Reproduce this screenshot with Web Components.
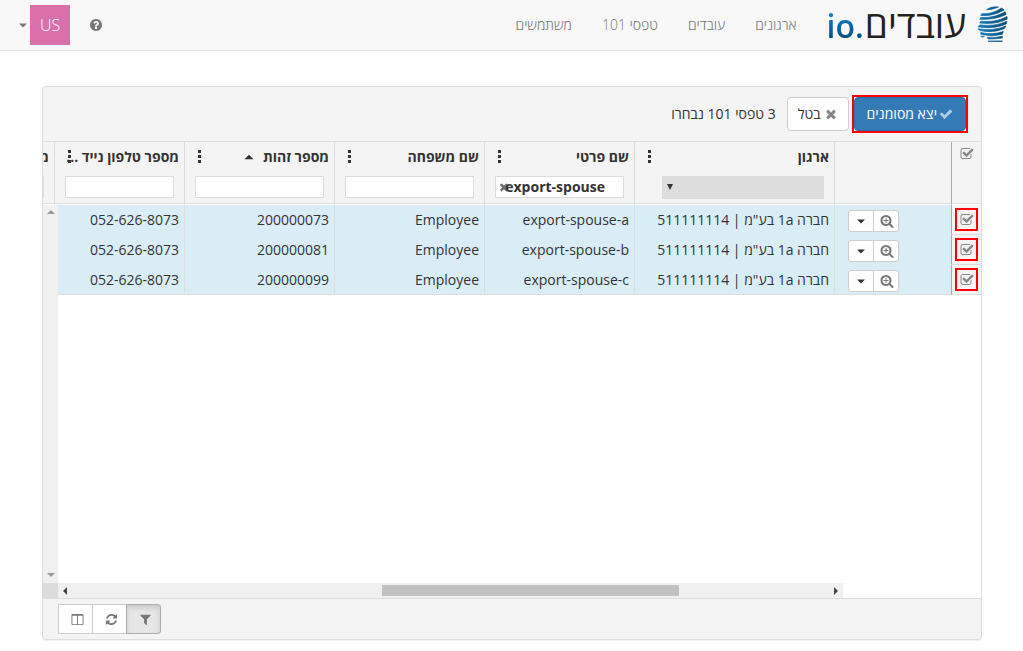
<!DOCTYPE html>
<html lang="he" dir="rtl">
<head>
<meta charset="utf-8">
<meta name="viewport" content="width=device-width, initial-scale=1">
<title>טפסי 101</title>
<style>
  body {
    margin: 0;
    min-height: 100vh;
    display: flex;
    flex-direction: column;
    background: #fff;
    color: #333;
    font: 14px/20px "Open Sans", "Noto Sans", sans-serif;
  }
  grid-panel { flex: 1; margin: 35px 41px 11px 42px; }
</style>
</head>
<body>
<app-header>
  <nav-item href="#orgs">ארגונים</nav-item>
  <nav-item href="#employees">עובדים</nav-item>
  <nav-item href="#forms">טפסי 101</nav-item>
  <nav-item href="#users">משתמשים</nav-item>
</app-header>
<grid-panel>
  <selection-bar slot="top" count="3 טפסי 101 נבחרו"></selection-bar>
  <data-grid></data-grid>
  <grid-tools slot="bottom"></grid-tools>
</grid-panel>

<script>
const ICONS = {
  check: 'M1671 566q0 40-28 68l-724 724-136 136q-28 28-68 28t-68-28l-136-136-362-362q-28-28-28-68t28-68l136-136q28-28 68-28t68 28l294 295 656-657q28-28 68-28t68 28l136 136q28 28 28 68z',
  times: 'M1490 1322q0 40-28 68l-136 136q-28 28-68 28t-68-28l-294-294-294 294q-28 28-68 28t-68-28l-136-136q-28-28-28-68t28-68l294-294-294-294q-28-28-28-68t28-68l136-136q28-28 68-28t68 28l294 294 294-294q28-28 68-28t68 28l136 136q28 28 28 68t-28 68l-294 294 294 294q28 28 28 68z',
  tick: 'M1472 930v318q0 119-84.5 203.5t-203.5 84.5h-832q-119 0-203.5-84.5t-84.5-203.5v-832q0-119 84.5-203.5t203.5-84.5h832q63 0 117 25 15 7 18 23 3 17-9 29l-49 49q-10 10-23 10-3 0-9-2-23-6-45-6h-832q-66 0-113 47t-47 113v832q0 66 47 113t113 47h832q66 0 113-47t47-113v-254q0-13 9-22l64-64q10-10 23-10 6 0 12 3 20 8 20 29zm231-489l-814 814q-24 24-57 24t-57-24l-430-430q-24-24-24-57t24-57l110-110q24-24 57-24t57 24l263 263 647-647q24-24 57-24t57 24l110 110q24 24 24 57t-24 57z',
  filter: 'M1595 295q17 41-14 70l-493 493v742q0 42-39 59-13 5-25 5-27 0-45-19l-256-256q-19-19-19-45v-486l-493-493q-31-29-14-70 17-39 59-39h1280q42 0 59 39z',
  refresh: 'M1639 1056q0 5-1 7-64 268-268 434.5t-478 166.5q-146 0-282.5-55t-243.5-157l-129 129q-19 19-45 19t-45-19-19-45v-448q0-26 19-45t45-19h448q26 0 45 19t19 45-19 45l-137 137q71 66 161 102t187 36q134 0 250-65t186-179q11-17 53-117 8-23 30-23h192q13 0 22.5 9.5t9.5 22.5zm25-800v448q0 26-19 45t-45 19h-448q-26 0-45-19t-19-45 19-45l138-138q-148-137-349-137-134 0-250 65t-186 179q-11 17-53 117-8 23-30 23h-199q-13 0-22.5-9.5t-9.5-22.5v-7q65-268 270-434.5t480-166.5q146 0 284 55.5t245 156.5l130-129q19-19 45-19t45 19 19 45z',
  zoom: 'M1088 800v64q0 13-9.5 22.5t-22.5 9.5h-224v224q0 13-9.5 22.5t-22.5 9.5h-64q-13 0-22.5-9.5t-9.5-22.5v-224h-224q-13 0-22.5-9.5t-9.5-22.5v-64q0-13 9.5-22.5t22.5-9.5h224v-224q0-13 9.5-22.5t22.5-9.5h64q13 0 22.5 9.5t9.5 22.5v224h224q13 0 22.5 9.5t9.5 22.5zm128 32q0-185-131.5-316.5t-316.5-131.5-316.5 131.5-131.5 316.5 131.5 316.5 316.5 131.5 316.5-131.5 131.5-316.5zm512 832q0 53-37.5 90.5t-90.5 37.5q-54 0-90-38l-343-342q-179 124-399 124-143 0-273.5-55.5t-225-150-150-225-55.5-273.5 55.5-273.5 150-225 225-150 273.5-55.5 273.5 55.5 225 150 150 225 55.5 273.5q0 220-124 399l343 343q37 37 37 90z',
  help: 'M1024 1376v-192q0-14-9-23t-23-9h-192q-14 0-23 9t-9 23v192q0 14 9 23t23 9h192q14 0 23-9t9-23zm256-672q0-88-55.5-163t-138.5-116-170-41q-243 0-371 213-15 24 8 42l132 100q7 6 19 6 16 0 25-12 53-68 86-92 34-24 86-24 48 0 85.5 26t37.5 59q0 38-20 61t-68 45q-63 28-115.5 86.5t-52.5 125.5v36q0 14 9 23t23 9h192q14 0 23-9t9-23q0-19 21.5-49.5t54.5-49.5q32-18 49-28.5t46-35 44.5-48 28-60.5 12.5-81zm384 192q0 209-103 385.5t-279.5 279.5-385.5 103-385.5-103-279.5-279.5-103-385.5 103-385.5 279.5-279.5 385.5-103 385.5 103 279.5 279.5 103 385.5z',
  columns: 'M224 1536h608v-1152h-640v1120q0 13 9.5 22.5t22.5 9.5zm1376-32v-1120h-640v1152h608q13 0 22.5-9.5t9.5-22.5zm128-1216v1216q0 66-47 113t-113 47h-1344q-66 0-113-47t-47-113v-1216q0-66 47-113t113-47h1344q66 0 113 47t47 113z',
  caret: 'M384 704h1024l-512 512z',
  up: 'M384 1152h1024l-512-512z'
};

function define(name, html, setup) {
  const tpl = document.createElement('template');
  tpl.innerHTML = html;
  customElements.define(name, class extends HTMLElement {
    constructor() {
      super();
      this.attachShadow({ mode: 'open' }).append(tpl.content.cloneNode(true));
    }
    connectedCallback() {
      if (setup && !this.ready) { this.ready = true; setup(this, this.shadowRoot); }
    }
  });
}

/* Single glyph from the icon set */
define('ui-icon', `
  <style>
    :host { display: inline-flex; flex: none; width: 14px; height: 14px; }
    svg { width: 100%; height: 100%; fill: currentColor; }
  </style>
  <svg viewBox="0 0 1792 1792" aria-hidden="true"><path/></svg>`,
  (el, root) => root.querySelector('path').setAttribute('d', ICONS[el.getAttribute('name')]));

/* Red frame drawn round the controls of interest */
define('mark-frame', `
  <style>:host { display: inline-flex; box-sizing: border-box; border: 2px solid #f00; }</style>
  <slot></slot>`);

define('tick-box', `
  <style>
    :host { display: inline-flex; }
    label { display: grid; padding: 3px 2px 2px 3px; color: #888; cursor: pointer; }
    input { appearance: none; margin: 0; width: 14px; height: 14px; grid-area: 1 / 1; }
    ui-icon { grid-area: 1 / 1; pointer-events: none; }
  </style>
  <label><input type="checkbox" checked><ui-icon name="tick"></ui-icon></label>`,
  (el, root) => root.querySelector('input').setAttribute('aria-label', el.getAttribute('label')));

define('nav-item', `
  <style>
    :host { display: block; }
    a { display: block; padding: 15px; color: #777; font-weight: 300; text-decoration: none; }
  </style>
  <a><slot></slot></a>`,
  (el, root) => { root.querySelector('a').href = el.getAttribute('href'); });

define('brand-logo', `
  <style>
    :host { display: block; }
    a { display: flex; align-items: center; height: 50px; padding: 0 15px; gap: 10px; direction: rtl; text-decoration: none; }
    .word { display: flex; direction: ltr; align-items: baseline; gap: 1px; }
    .io {
      font: 600 32px/50px "Open Sans", sans-serif;
      background: linear-gradient(#0a7cc4 30%, #07466f 85%);
      background-clip: text;
      color: transparent;
    }
    .he { font-size: 37px; line-height: 50px; font-weight: 500; color: #222; }
    svg { width: 32px; height: 36px; flex: none; margin-bottom: 2px; }
  </style>
  <a href="#home">
    <svg viewBox="0 0 34 38" aria-hidden="true">
      <defs><linearGradient id="g" gradientUnits="userSpaceOnUse" x1="0" y1="0" x2="34" y2="0"><stop offset="0" stop-color="#0d7cc0"/><stop offset="1" stop-color="#0a4a74"/></linearGradient></defs>
      <g fill="url(#g)" stroke="url(#g)" stroke-width=".7" stroke-linejoin="round">
        <path d="M11 4Q18 4 24 1Q16 0 11 4Z"/>
        <path d="M6 8Q17 9 27 2L30 4Q18 11 5 10Z"/>
        <path d="M5 12Q19 13 31 6L32 9Q19 15 4 14Z"/>
        <path d="M5 16Q20 18 33 11L33 14Q20 20 4 18Z"/>
        <path d="M4 20Q20 22 33 16L32 19Q19 25 2 22Z"/>
        <path d="M2 24Q18 27 32 21L30 24Q18 29 4 26Z"/>
        <path d="M5 28Q18 31 29 27L28 30Q17 33 5 30Z"/>
        <path d="M5 32L9 32L7 33Z"/>
        <path d="M12 33Q20 34 28 32V34Q20 35 13 35Z"/>
        <path d="M13 37H28V37.6H13Z"/>
      </g>
    </svg>
    <span class="word"><span class="io">io.</span><span class="he">עובדים</span></span>
  </a>`);

define('app-header', `
  <style>
    :host { display: block; background: #f8f8f8; border-bottom: 1px solid #e7e7e7; }
    header, nav, .side { display: flex; align-items: center; }
    header { min-height: 50px; justify-content: space-between; }
    .side { direction: ltr; padding-left: 16px; gap: 19px; }
    button { border: 0; padding: 0; background: none; color: #777; font: inherit; display: flex; align-items: center; }
    .avatar { display: block; width: 40px; background: #d96fab; color: #fff; font-size: 16px; font-weight: 300; line-height: 40px; text-align: center; }
  </style>
  <header>
    <nav><brand-logo></brand-logo><slot></slot></nav>
    <div class="side">
      <button class="user"><ui-icon name="caret"></ui-icon><span class="avatar">US</span></button>
      <button aria-label="עזרה"><ui-icon name="help"></ui-icon></button>
    </div>
  </header>`);

define('grid-panel', `
  <style>
    :host { display: flex; flex-direction: column; border: 1px solid #ddd; border-radius: 4px; overflow: hidden; background: #f4f4f4; box-shadow: 0 1px 1px rgba(0,0,0,.05); }
    ::slotted(data-grid) { flex: 1; }
  </style>
  <slot name="top"></slot><slot></slot><slot name="bottom"></slot>`);

define('selection-bar', `
  <style>
    :host { display: flex; align-items: center; padding: 8px 13px; border-bottom: 1px solid #ddd; }
    button { display: flex; align-items: center; gap: 2px; height: 34px; box-sizing: border-box; padding: 0 12px; border: 1px solid #ccc; border-radius: 4px; background: #fff; color: #333; font: inherit; }
    button ui-icon { opacity: .6; }
    .primary { background: #337ab7; border-color: #2e6da4; color: #fff; }
    .cancel { margin: 0 3px 0 11px; padding: 0 10px; gap: 3px; }
  </style>
  <mark-frame><button class="primary"><ui-icon name="check"></ui-icon>יצא מסומנים</button></mark-frame>
  <button class="cancel"><ui-icon name="times"></ui-icon>בטל</button>
  <span></span>`,
  (el, root) => { root.querySelector('span').textContent = el.getAttribute('count'); });

/* Column heading: title, sort arrow, menu dots and an optional filter */
define('column-head', `
  <style>
    :host { display: block; position: relative; height: 61px; font-weight: bold; }
    .title { display: flex; align-items: center; height: 34px; padding: 0 5px 4px; box-sizing: border-box; white-space: nowrap; gap: 6px; }
    .menu { position: absolute; left: 12px; top: 8px; width: 5px; height: 13px; padding: 0; border: 0; display: grid; background: none; color: #333; }
    svg { width: 5px; height: 13px; fill: currentColor; }
    .filter { margin: 0 10px; position: relative; }
    input { display: block; width: 100%; height: 22px; box-sizing: border-box; border: 1px solid #ddd; background: #fff; padding: 0 18px 2px 5px; font: inherit; color: #333; }
    select { display: block; width: 100%; height: 23px; border: 0; background: #ddd; appearance: none; font: inherit; }
    .pick { margin-left: 27px; }
    .pick::after { content: ""; position: absolute; left: 5px; top: 8px; border: solid transparent; border-width: 6px 3px 0; border-top-color: #333; }
    .clear { position: absolute; left: 3px; top: 5px; width: 12px; height: 12px; padding: 0; border: 0; background: none; color: #333; opacity: .7; display: grid; }
    .clear ui-icon { width: 12px; height: 12px; }
    .title ui-icon { width: 16px; height: 16px; }
  </style>
  <div class="title"><slot></slot></div>
  <button class="menu" aria-label="תפריט עמודה"><svg viewBox="0 0 5 13"><path d="M1 0h3v3H1zM1 5h3v3H1zM1 10h3v3H1z"/></svg></button>
  <div class="filter"></div>`,
  (el, root) => {
    const kind = el.getAttribute('filter'), box = root.querySelector('.filter');
    if (el.hasAttribute('sorted')) root.querySelector('.title').insertAdjacentHTML('beforeend', '<ui-icon name="up"></ui-icon>');
    const field = document.createElement(kind === 'select' ? 'select' : 'input');
    field.setAttribute('aria-label', 'סינון ' + el.textContent);
    box.append(field);
    if (kind === 'select') box.classList.add('pick');
    else if (el.hasAttribute('value')) {
      field.value = el.getAttribute('value');
      box.insertAdjacentHTML('beforeend', '<button class="clear" aria-label="נקה"><ui-icon name="times"></ui-icon></button>');
    }
  });

define('row-actions', `
  <style>
    :host { display: flex; direction: ltr; padding: 2px 0 0 13px; }
    button { width: 26px; height: 22px; box-sizing: border-box; border: 1px solid #ccc; background: #fff; color: #333; padding: 0; display: flex; align-items: center; justify-content: center; border-radius: 3px 0 0 3px; }
    button + button { margin-left: -1px; border-radius: 0 3px 3px 0; color: #777; padding-left: 2px; }
  </style>
  <button aria-label="פעולות"><ui-icon name="caret"></ui-icon></button>
  <button aria-label="הצג"><ui-icon name="zoom"></ui-icon></button>`);

define('data-grid', `
  <style>
    :host { display: flex; flex-direction: column; background: #fff; }
    .view { position: relative; flex: 1; overflow: hidden; }
    table { table-layout: fixed; border-collapse: separate; border-spacing: 0; width: 1007px; }
    .c-check { width: 30px; } .c-act { width: 117px; } .c-org { width: 200px; }
    .c-name { width: 150px; } .c-phone { width: 130px; } .c-more { width: 80px; }
    th, td { padding: 0; box-sizing: border-box; border-left: 1px solid #ddd; text-align: right; overflow: hidden; white-space: nowrap; }
    th { height: 63px; vertical-align: top; background: #f4f4f4; border-bottom: 1px solid #fff; box-shadow: inset 0 -1px #ddd; }
    td { height: 30px; padding-right: 5px; background: #d9edf7; }
    tr > :first-child { border-left-color: #aaa; text-align: center; padding: 0; }
    td:first-child { background: #f4f4f4; border-bottom: 1px solid #ddd; }
    th:first-child tick-box { margin-top: 2px; }
    tbody tr:last-child td { border-bottom: 1px solid #ddd; }
    td mark-frame { vertical-align: middle; }
    .vbar { position: absolute; left: 0; top: 63px; bottom: 0; width: 15px; background: #f0f0f0; display: flex; flex-direction: column; justify-content: space-between; align-items: center; padding: 5px 0 6px; box-sizing: border-box; }
    i { border: 4px solid transparent; }
    .u { border-top: 0; border-bottom-color: #999; }
    .d { border-bottom: 0; border-top-color: #999; }
    .l { border-left: 0; border-right-color: #444; }
    .r { border-right: 0; border-left-color: #444; }
    .foot { display: flex; direction: ltr; height: 15px; padding-right: 138px; border-bottom: 1px solid #ddd; }
    .corner { width: 15px; background: #dcdcdc; }
    .hbar { flex: 1; display: flex; align-items: center; justify-content: space-between; padding: 0 5px; background: #f0f0f0; }
    .track { flex: 1; display: flex; margin: 0 6px; }
    .before { flex: 309; } .thumb { flex: 297; height: 11px; background: #c1c1c1; } .after { flex: 149; }
  </style>
  <div class="view">
    <table>
      <colgroup><col class="c-check"><col class="c-act"><col class="c-org"><col class="c-name"><col class="c-name"><col class="c-name"><col class="c-phone"><col class="c-more"></colgroup>
      <thead><tr>
        <th><tick-box label="בחר הכל"></tick-box></th>
        <th></th>
        <th><column-head filter="select">ארגון</column-head></th>
        <th><column-head value="export-spouse">שם פרטי</column-head></th>
        <th><column-head>שם משפחה</column-head></th>
        <th><column-head sorted>מספר זהות</column-head></th>
        <th><column-head>מספר טלפון נייד ...</column-head></th>
        <th><column-head>מספר</column-head></th>
      </tr></thead>
      <tbody></tbody>
    </table>
    <div class="vbar"><i class="u"></i><i class="d"></i></div>
  </div>
  <div class="foot"><div class="corner"></div><div class="hbar"><i class="l"></i><div class="track"><div class="before"></div><div class="thumb"></div><div class="after"></div></div><i class="r"></i></div></div>`,
  (el, root) => {
    const rows = [['export-spouse-a', '200000073'], ['export-spouse-b', '200000081'], ['export-spouse-c', '200000099']];
    root.querySelector('tbody').innerHTML = rows.map(([name, id]) => `<tr>
      <td><mark-frame><tick-box label="${name}"></tick-box></mark-frame></td>
      <td><row-actions></row-actions></td>
      <td>חברה 1a בע"מ | 511111114</td>
      <td>${name}</td><td>Employee</td><td>${id}</td><td>052-626-8073</td><td></td></tr>`).join('');
  });

define('grid-tools', `
  <style>
    :host { display: flex; direction: ltr; padding: 5px 15px; }
    button { width: 35px; height: 30px; box-sizing: border-box; margin-right: -1px; padding: 0 0 0 3px; border: 1px solid #ccc; background: #fff; color: #777; display: flex; align-items: center; justify-content: center; }
    button:first-child { border-radius: 3px 0 0 3px; width: 36px; }
    button:last-child { border-radius: 0 3px 3px 0; background: #e6e6e6; border-color: #adadad; box-shadow: inset 0 3px 5px rgba(0,0,0,.125); }
    ui-icon { width: 13px; height: 13px; }
  </style>
  <button aria-label="עמודות"><ui-icon name="columns"></ui-icon></button>
  <button aria-label="רענן"><ui-icon name="refresh"></ui-icon></button>
  <button aria-label="סינון" aria-pressed="true"><ui-icon name="filter"></ui-icon></button>`);
</script>
</body>
</html>
